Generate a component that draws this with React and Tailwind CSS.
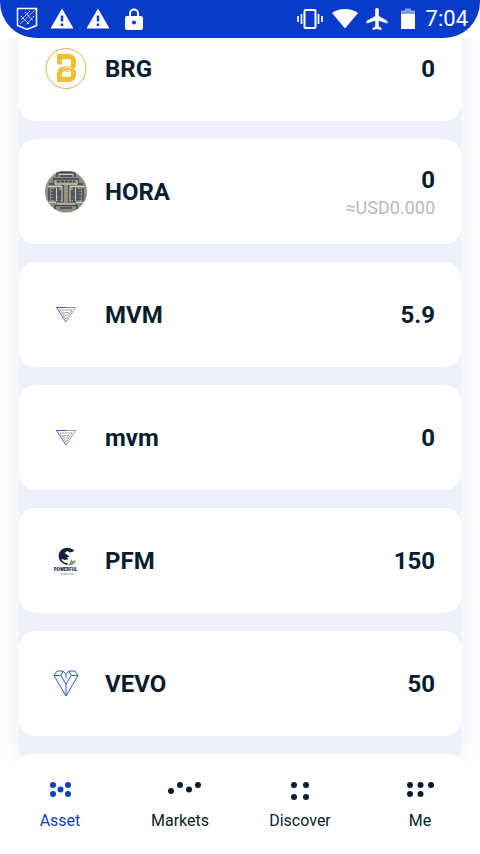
const NAV_DOTS = {
  Asset: [[5, 5], [20, 5], [12.5, 9.5], [5, 14], [20, 14]],
  Markets: [[12, 11], [21, 5], [30, 9.5], [39, 5]],
  Discover: [[4, 5], [16, 5], [4, 17], [16, 17]],
  Me: [[3, 5], [13.5, 5], [24, 5], [3, 14], [13.5, 14]],
};

const TABS = [
  { name: "Asset", width: 25 },
  { name: "Markets", width: 42 },
  { name: "Discover", width: 20 },
  { name: "Me", width: 27 },
];

function BrgLogo() {
  return (
    <svg viewBox="0 0 42 42" className="h-[42px] w-[42px]" fill="none">
      <circle cx="21" cy="20.500" r="20" stroke="#d9b44a" strokeWidth="1" />
      <g stroke="#efbf33" strokeWidth="5">
        <path d="M14.500 16.500V8.500h9q5 0 5 5v2q0 5-5 5.500h-4" />
        <path d="M28.500 22v4q0 5.500-5 5.500h-9v-5q0-5 5-5.500h4" />
      </g>
      <path d="M17 25.500c1-4 8-1 9-6M17.500 22c2-4 7-1 8.500-4.500" stroke="#fff" strokeWidth=".7" />
    </svg>
  );
}

function HoraLogo() {
  return (
    <svg viewBox="0 0 42 42" className="h-[42px] w-[42px]" fill="none">
      <defs>
        <clipPath id="hora-coin">
          <circle cx="21" cy="20.500" r="21" />
        </clipPath>
      </defs>
      <g clipPath="url(#hora-coin)">
        <path d="M0 0h42v42H0z" fill="#8f8c7f" />
        <g stroke="#3b4759" strokeWidth="1.500">
          <path d="M12 6V1.500h18V6M15 5h12M4 13h5V8h24v5h5" />
          <path d="M12 10.500h18" strokeDasharray="3 1" />
          <path d="M4 17v13M10 17v13M38 17v13M32 17v13M13 16v14M29 16v14" />
          <path d="M18 14v16M24 14v16M11 30.500h8M23 30.500h8" />
          <path d="M10 38v-3.500h22V38M15 37h12" />
        </g>
        <g fill="#4c5665">
          <path d="M6 18h3v11H6zM33 18h3v11h-3zM14 19h3v10h-3zM25 19h3v10h-3z" />
        </g>
        <g stroke="#d3ceba" strokeWidth="1">
          <path d="M10 9v4h22V9M14 3.500h14M2 15.500h15V31M40 15.500H25V31M11.500 17v13M30.500 17v13M3 31.500h8M31 31.500h8M12 33h18" />
        </g>
        <path d="M21 14v17M7 20v9M35 20v9" stroke="#b4ad92" strokeDasharray="1 2" />
        <path d="M4 30h12M27 30h12M12 26h18" stroke="#c8a557" strokeDasharray="1 3" />
      </g>
    </svg>
  );
}

function MvmLogo() {
  return (
    <svg viewBox="0 0 20 16" className="h-4 w-5" fill="none" strokeWidth="1">
      <path d="M10 .5h9.500L10 15" stroke="#9a9aa0" />
      <path d="M10 15L.5.5H10" stroke="#3c5fb4" />
      <path d="M10 12L4 3h12z" stroke="#8791a8" strokeDasharray="2 .6" />
      <path d="M10 9L7 5.500h6z" stroke="#bdb09c" />
    </svg>
  );
}

function PfmLogo() {
  return (
    <svg viewBox="0 0 24 28" className="h-7 w-6">
      <path
        d="M20 3.500C16-.5 9 0 6 4.500c-3.500 5 0 12 6.500 13.500l2-1.500c-4-.5-6.500-2-7-4.500l4 1 3-1-2-1.500 3-1-2-1.500-3-2 3-2 2 1.500 4-1z"
        fill="#10233a"
      />
      <path d="M14 18c3-2 2.500-4 3-6l2 2.500 2.500-1.500c.5 3-3 6-7.500 5z" fill="#8d8868" />
      <text x="11.500" y="23.500" textAnchor="middle" fontSize="4.500" fontWeight="900" fill="#10233a">POWERFUL</text>
      <text x="13" y="27.500" textAnchor="middle" fontSize="4" fill="#8b90a3">training</text>
    </svg>
  );
}

function VevoLogo() {
  return (
    <svg viewBox="0 0 26 27" className="h-[27px] w-[26px]" fill="none" stroke="#2f60bd" strokeWidth="1">
      <path d="M4 1h6l3 3.500L16 1h6l3 4.500-12 20.500L1 5.500z" />
      <path d="M1 5.500h7l5 9V26M25 5.500h-7l-5 9M8 5.500L10 1M18 5.500L16 1M13 4.500v4" />
    </svg>
  );
}

const ASSETS = [
  { name: "BRG", amount: "0", Logo: BrgLogo },
  { name: "HORA", amount: "0", value: "≈USD0.000", Logo: HoraLogo },
  { name: "MVM", amount: "5.9", Logo: MvmLogo },
  { name: "mvm", amount: "0", Logo: MvmLogo },
  { name: "PFM", amount: "150", Logo: PfmLogo },
  { name: "VEVO", amount: "50", Logo: VevoLogo },
];

function Warning() {
  return (
    <svg viewBox="0 0 24 22" className="h-[22px] w-6">
      <path fillRule="evenodd" fill="#fff" d="M12 .5l11.500 20H.5zM10.800 7.500v6h2.400v-6zm0 8v2.400h2.400v-2.400z" />
    </svg>
  );
}

function StatusBar() {
  return (
    <div className="relative z-10 bg-white">
      <header className="flex h-[38px] items-center justify-between rounded-b-[36px] bg-[#093bca] pr-3 pl-4 text-white">
        <div className="flex items-center gap-3">
          <svg viewBox="0 0 22 24" className="h-6 w-[22px]" fill="none" stroke="#fff">
            <path d="M1.500 1.500h19v17L11 22.500l-9.500-4z" strokeWidth="1.500" />
            <path d="M20 2L4 17M9 5l8 9M5 9l8 8M14 4l-9 9M18 9l-8 9" strokeDasharray="2 1" />
          </svg>
          <Warning />
          <Warning />
          <svg viewBox="0 0 24 24" className="h-6 w-6">
            <path fillRule="evenodd" fill="#fff" d="M7 9V6.500a5 5 0 0 1 10 0V9h2a2 2 0 0 1 2 2v10a2 2 0 0 1-2 2H5a2 2 0 0 1-2-2V11a2 2 0 0 1 2-2zm2 0h6V6.500a3 3 0 0 0-6 0zm3 4.500a2 2 0 1 0 0 4 2 2 0 0 0 0-4z" />
          </svg>
        </div>
        <div className="flex items-center gap-2">
          <svg viewBox="0 0 28 22" className="h-[22px] w-7" fill="none" stroke="#fff" strokeWidth="2">
            <rect x="8.500" y="2" width="11" height="18" rx="1" />
            <path d="M2 8v6M5.500 6v10M22.500 6v10M26 8v6" strokeWidth="1.700" />
          </svg>
          <svg viewBox="0 0 26 22" className="h-[22px] w-[26px]">
            <path fill="#fff" d="M0 5C7-.5 19-.5 26 5L13 20.500z" />
          </svg>
          <svg viewBox="0 0 22 24" className="h-6 w-[22px]">
            <path fill="#fff" d="M11 1c1 0 1.800.8 1.800 1.800V9L21.500 14v2.500l-8.700-2.700v5.400l2.700 2V23L11 22l-4.500 1v-1.800l2.700-2v-5.400L.5 16.500V14l8.700-5V2.800C9.200 1.800 10 1 11 1z" />
          </svg>
          <svg viewBox="0 0 22 24" className="h-6 w-[22px]" fill="#fff">
            <path d="M5 7h14v15H5z" />
            <path d="M5 3.500h4v-2h6v2h4V7H5z" opacity=".5" />
          </svg>
          <time className="text-[22px] leading-6">7:04</time>
        </div>
      </header>
    </div>
  );
}

function AssetCard({ name, amount, value, Logo }) {
  return (
    <li className="flex h-[105px] items-center rounded-2xl bg-white px-[26px]">
      <div className="flex w-[42px] shrink-0 justify-center">
        <Logo />
      </div>
      <h2 className="ml-[18px] flex-1 text-2xl font-bold">{name}</h2>
      <div className="text-right">
        <p className="text-2xl leading-8 font-bold">{amount}</p>
        {value && <p className="text-lg leading-6 text-[#b8b8b8]">{value}</p>}
      </div>
    </li>
  );
}

export default function App() {
  return (
    <div className="flex h-screen flex-col overflow-hidden bg-white font-[Roboto,sans-serif] text-[#071d2d]">
      <StatusBar />
      <main className="min-h-0 flex-1 px-[19px]">
        <ul className="-mt-[22px] flex flex-col gap-[18px] rounded-3xl bg-[#edf0f9] pb-8 shadow-[0_0_20px_4px_#f0f2fa]">
          {ASSETS.map((asset) => (
            <AssetCard key={asset.name} {...asset} />
          ))}
        </ul>
      </main>
      <nav className="relative z-10 flex h-[100px] shrink-0 rounded-t-[36px] bg-white">
        {TABS.map(({ name, width }) => (
          <button
            key={name}
            type="button"
            className={`flex flex-1 flex-col items-center gap-2 pt-[26px] ${name === "Asset" ? "text-[#1241be]" : ""}`}
          >
            <svg width={width} height="22" fill="currentColor">
              {NAV_DOTS[name].map(([x, y]) => (
                <circle key={`${x}-${y}`} cx={x} cy={y} r="3" />
              ))}
            </svg>
            <span className="text-base leading-[22px]">{name}</span>
          </button>
        ))}
      </nav>
    </div>
  );
}
